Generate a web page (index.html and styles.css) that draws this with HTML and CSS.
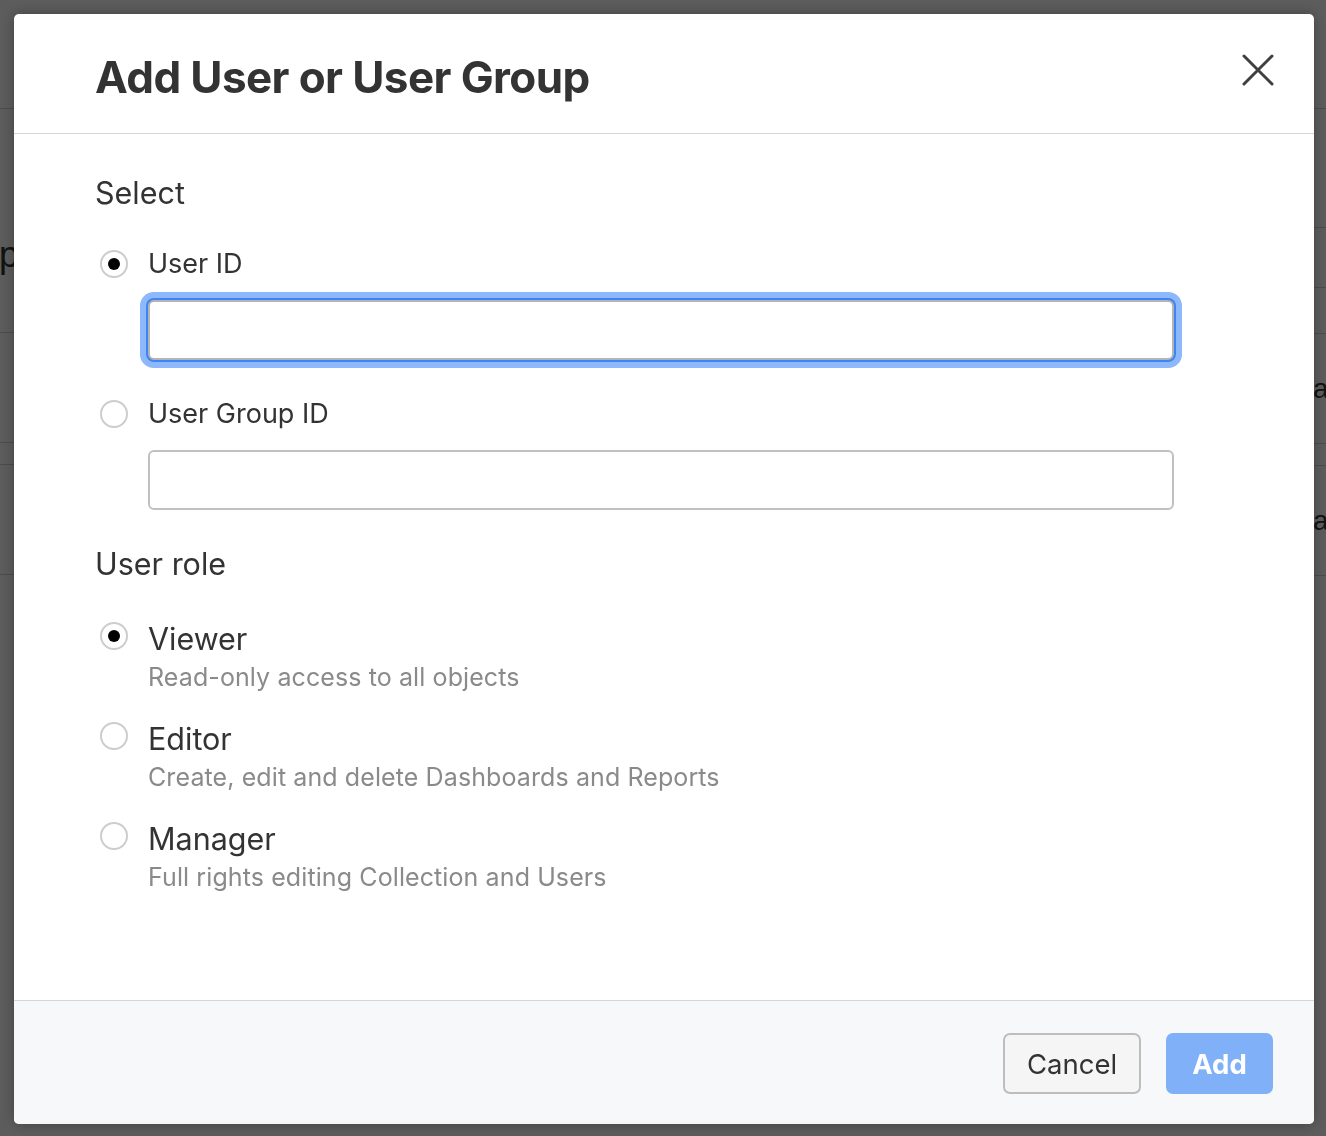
FILE: index.html
```html
<!DOCTYPE html>
<html lang="en">
<head>
<meta charset="utf-8">
<title>Add User or User Group</title>
<link rel="stylesheet" href="styles.css">
</head>
<body>
<div class="page">
  <div class="col col-left">
    <div class="row h109"></div>
    <div class="row h224"><span class="bg-text bg-p">p</span></div>
    <div class="row h110"></div>
    <div class="row h22"></div>
    <div class="row h110"></div>
  </div>
  <div class="col col-right">
    <div class="row h109"></div>
    <div class="row h119"></div>
    <div class="row h60"></div>
    <div class="row h46"></div>
    <div class="row h110"><span class="bg-text bg-a">a</span></div>
    <div class="row h22"></div>
    <div class="row h110"><span class="bg-text bg-a">a</span></div>
  </div>
</div>

<div class="overlay">
  <div class="modal" role="dialog" aria-labelledby="modal-title">
    <header class="modal-header">
      <h1 id="modal-title" class="modal-title">Add User or User Group</h1>
      <button class="close" type="button" aria-label="Close">
        <svg width="32" height="32" viewBox="0 0 32 32" aria-hidden="true">
          <path d="M2 2 L30 30 M30 2 L2 30" stroke="#404040" stroke-width="3" stroke-linecap="round" fill="none"/>
        </svg>
      </button>
    </header>

    <div class="modal-body">
      <div class="section-title">Select</div>

      <label class="radio-row">
        <span class="radio checked"></span>
        <span class="radio-label">User ID</span>
      </label>
      <input class="text-input focused" type="text">

      <label class="radio-row second">
        <span class="radio"></span>
        <span class="radio-label">User Group ID</span>
      </label>
      <input class="text-input" type="text">

      <div class="section-title role-title">User role</div>

      <div class="role-list">
        <label class="role">
          <span class="radio checked"></span>
          <span class="role-text">
            <span class="role-name">Viewer</span>
            <span class="role-desc">Read-only access to all objects</span>
          </span>
        </label>
        <label class="role">
          <span class="radio"></span>
          <span class="role-text">
            <span class="role-name">Editor</span>
            <span class="role-desc">Create, edit and delete Dashboards and Reports</span>
          </span>
        </label>
        <label class="role">
          <span class="radio"></span>
          <span class="role-text">
            <span class="role-name">Manager</span>
            <span class="role-desc">Full rights editing Collection and Users</span>
          </span>
        </label>
      </div>
    </div>

    <footer class="modal-footer">
      <button class="btn btn-cancel" type="button">Cancel</button>
      <button class="btn btn-add" type="button">Add</button>
    </footer>
  </div>
</div>
</body>
</html>
```

FILE: styles.css
```css
* {
  box-sizing: border-box;
}

html, body {
  margin: 0;
  padding: 0;
  height: 100%;
}

body {
  background: #ffffff;
  font-family: Inter, "Liberation Sans", Arial, sans-serif;
  color: #333333;
  overflow: hidden;
}

/* underlying page (visible only at the edges) */
.page {
  display: flex;
  justify-content: space-between;
  height: 100%;
}

.col {
  width: 40px;
  overflow: hidden;
}

.row {
  border-bottom: 1px solid #d2d2d2;
  color: #333;
}

.h109 { height: 109px; }
.h224 { height: 224px; }
.h110 { height: 110px; }
.h22 { height: 22px; }
.h119 { height: 119px; }
.h60 { height: 60px; }
.h46 { height: 46px; }

.bg-text {
  display: block;
  font-family: "Liberation Sans", Arial, sans-serif;
}

.bg-p {
  font-size: 36px;
  line-height: 36px;
  padding-top: 128px;
  padding-left: 0;
  margin-left: -1px;
}

.bg-a {
  font-size: 28px;
  line-height: 28px;
  padding-top: 41px;
  padding-left: 27px;
}

/* overlay + modal */
.overlay {
  position: fixed;
  inset: 0;
  background: rgba(0, 0, 0, 0.64);
  padding: 14px 12px 12px 14px;
  display: flex;
}

.modal {
  flex: 1;
  display: flex;
  flex-direction: column;
  background: #ffffff;
  border-radius: 5px;
  box-shadow: 0 0 14px rgba(0, 0, 0, 0.3);
  overflow: hidden;
}

.modal-header {
  display: flex;
  justify-content: space-between;
  align-items: flex-start;
  height: 120px;
  padding: 0 40px 0 81px;
  border-bottom: 1px solid #d6d6d6;
}

.modal-title {
  margin: 0;
  padding-top: 39px;
  font-size: 44px;
  line-height: 48px;
  font-weight: 700;
  letter-spacing: -0.6px;
  color: #333333;
}

.close {
  margin-top: 40px;
  padding: 0;
  border: 0;
  background: transparent;
  width: 32px;
  height: 32px;
  display: block;
}

.close svg {
  display: block;
}

.modal-body {
  flex: 1;
  padding: 39px 81px 0 81px;
  display: flex;
  flex-direction: column;
  align-items: flex-start;
}

.section-title {
  font-size: 30.5px;
  line-height: 40px;
  color: #333333;
}

.role-title {
  margin-top: 34px;
}

.radio-row {
  display: flex;
  align-items: center;
  height: 40px;
  margin-top: 31px;
  padding-left: 5px;
}

.radio-row.second {
  margin-top: 34px;
}

.radio {
  flex: none;
  width: 28px;
  height: 28px;
  border-radius: 50%;
  border: 2px solid #cdcdcd;
  background: #ffffff;
  position: relative;
}

.radio.checked::after {
  content: "";
  position: absolute;
  left: 50%;
  top: 50%;
  width: 12px;
  height: 12px;
  margin: -6px 0 0 -6px;
  border-radius: 50%;
  background: #000000;
}

.radio-label {
  margin-left: 20px;
  font-size: 27px;
  line-height: 40px;
  color: #333333;
}

.text-input {
  display: block;
  margin: 16px 0 0 53px;
  width: 1026px;
  height: 60px;
  border: 2px solid #c0c0c0;
  border-radius: 6px;
  background: #ffffff;
  font: inherit;
  font-size: 27px;
  outline: none;
}

.text-input.focused {
  border-color: #b4b4b4;
  box-shadow: 0 0 0 2px #3d84f4, 0 0 0 8px #8db8fb;
}

.role-list {
  display: flex;
  flex-direction: column;
  gap: 26px;
  margin-top: 35px;
}

.role {
  display: flex;
  align-items: flex-start;
  padding-left: 5px;
}

.role .radio {
  margin-top: 3px;
}

.role-text {
  display: flex;
  flex-direction: column;
  margin-left: 20px;
}

.role-name {
  font-size: 30.5px;
  line-height: 40px;
  color: #333333;
}

.role-desc {
  margin-top: 2px;
  font-size: 25px;
  line-height: 32px;
  color: #8a8a8a;
  letter-spacing: 0.1px;
}

.modal-footer {
  display: flex;
  justify-content: flex-end;
  align-items: center;
  gap: 25px;
  height: 124px;
  padding: 2px 41px 0 0;
  border-top: 1px solid #d6d6d6;
  background: #f7f8fa;
}

.btn {
  height: 61px;
  border-radius: 7px;
  font-family: inherit;
  font-size: 27.5px;
  padding: 0;
}

.btn-cancel {
  width: 138px;
  border: 2px solid #bdbdbd;
  background: #f5f5f5;
  color: #333333;
}

.btn-add {
  width: 107px;
  border: 0;
  background: #80b0f8;
  color: #ffffff;
  font-weight: 700;
}
```
